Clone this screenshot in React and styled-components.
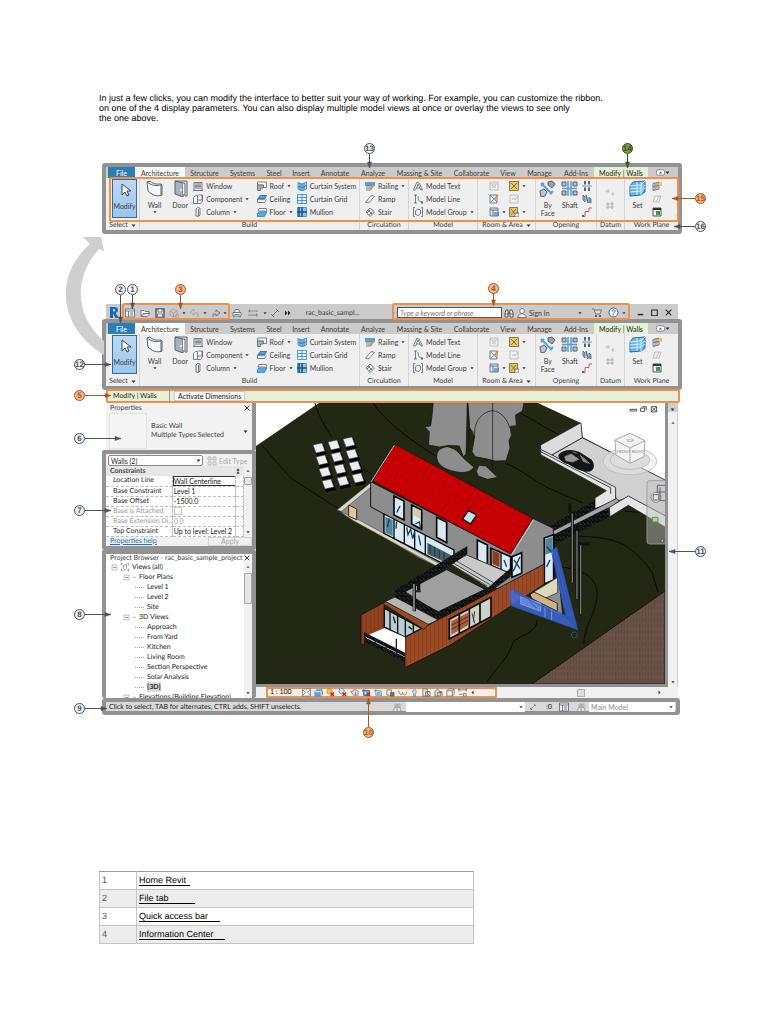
import { useState } from 'react';
import styled, { createGlobalStyle, css, ThemeProvider } from 'styled-components';

const theme = {
  frame: '#929292',
  chrome: '#cbcbcb',
  panel: '#efefef',
  line: '#d4d4d4',
  orange: '#f0914a',
  text: '#3c3c3c',
  blue: '#2b7db8',
};

// styles
const GlobalStyle = createGlobalStyle`
  * {
    box-sizing: border-box;
  }

  body {
    margin: 0;
    background: #fff;
    font-family: 'Liberation Sans', Arial, sans-serif;
    text-rendering: geometricPrecision;
  }

  button,
  input,
  select {
    margin: 0;
    padding: 0;
    border: 0;
    border-radius: 0;
    background: none;
    color: inherit;
    font: inherit;
  }

  svg {
    display: block;
    flex: none;
  }
`;

const StyledPage = styled.main`
  padding: 93px 0 80px;
`;

const StyledIntro = styled.p`
  margin: 0 80px 40px 99px;
  font-size: 9px;
  line-height: 10px;
  color: #000;
`;

const StyledFigure = styled.figure`
  position: relative;
  margin: 0 86px 70px 102px;
  font-family: Lato, 'Open Sans', sans-serif;
  font-size: 7px;
  line-height: 10px;
  color: ${({ theme }) => theme.text};
`;

const StyledRibbon = styled.div`
  border: 4px solid ${({ theme }) => theme.frame};
  border-radius: 3px;
  background: ${({ theme }) => theme.panel};
`;

const StyledTabs = styled.nav`
  display: grid;
  grid-template-columns: 2fr 27fr 50fr 39fr 37fr 26fr 28fr 40fr 36fr 57fr 47fr 26fr 37fr 36fr 54fr 30fr;
  height: 11px;
  background: ${({ theme }) => theme.chrome};
`;

const tabColors = {
  file: css`
    background: ${({ theme }) => theme.blue};
    color: #fff;
  `,
  active: css`
    background: #fafafa;
  `,
  context: css`
    background: #e4f2d8;
    color: #222;
  `,
};

const StyledTab = styled.button`
  min-width: 0;
  white-space: nowrap;
  display: flex;
  justify-content: center;
  align-items: center;
  ${({ $kind }) => tabColors[$kind]}
`;

const StyledPanels = styled.div`
  display: grid;
  grid-template-columns: 34fr 220fr 49fr 69fr 58fr 61fr 28fr 53fr;
`;

const StyledPanel = styled.section`
  min-width: 0;
  border-right: 1px solid ${({ theme }) => theme.line};

  &:last-child {
    border-right: 0;
  }
`;

const StyledPanelBody = styled.div`
  display: grid;
  grid-template-columns: ${({ $cols }) => $cols};
  height: 42px;
  padding: 1px 0 2px;
`;

const StyledPanelTitle = styled.div`
  display: flex;
  justify-content: center;
  align-items: center;
  gap: 3px;
  height: 10px;
  white-space: nowrap;
`;

const StyledBigTool = styled.button`
  display: flex;
  flex-direction: column;
  align-items: center;
  justify-content: flex-start;
  gap: 4px;
  min-width: 0;
  padding-top: 1px;
  line-height: 8px;
  color: ${({ theme }) => theme.text};

  ${({ $selected }) =>
    $selected &&
    css`
      margin: 0 2px 0 6px;
      border: 1px solid #2f6ea5;
      background: linear-gradient(#bcd8f2, #9cc6ee);
    `}
`;

const StyledBigLabel = styled.span`
  display: flex;
  flex-direction: column;
  align-items: center;
  gap: 1px;
`;

const StyledToolColumn = styled.div`
  display: flex;
  flex-direction: column;
  justify-content: ${({ $center }) => ($center ? 'center' : 'flex-start')};
  min-width: 0;
  padding-left: 2px;
`;

const StyledTool = styled.button`
  display: flex;
  align-items: center;
  gap: 3px;
  height: 13px;
  white-space: nowrap;
  text-align: left;
`;

const StyledHighlight = styled.div`
  position: absolute;
  inset: ${({ $inset }) => $inset};
  border: 2px solid ${({ theme }) => theme.orange};
  border-radius: 2px;
  pointer-events: none;
`;

const StyledQuickHighlight = styled(StyledHighlight)`
  height: 17px;
`;

const calloutTones = {
  plain: ['#f2f2f4', '#4b5260'],
  orange: ['#f4b98c', '#a8571c'],
  green: ['#7d9a45', '#3d5418'],
};

const calloutDirections = {
  down: 'column',
  up: 'column-reverse',
  right: 'row',
  left: 'row-reverse',
};

const StyledCallout = styled.div`
  position: absolute;
  z-index: 2;
  display: flex;
  flex-direction: ${({ $dir }) => calloutDirections[$dir]};
  align-items: center;
  top: ${({ $top }) => $top}px;
  ${({ $dir, $x }) => {
    if ($dir === 'right') return 'left: -28px;';
    if ($dir === 'left') return 'right: -24px;';
    return `left: calc(100% * ${$x} / 580 - 5px);`;
  }}
  color: ${({ $tone }) => calloutTones[$tone][1]};
`;

const StyledNumber = styled.span`
  width: 11px;
  height: 11px;
  border: 1px solid currentColor;
  border-radius: 50%;
  background: ${({ $tone }) => calloutTones[$tone][0]};
  font-family: 'Liberation Sans', Arial, sans-serif;
  font-size: 8px;
  font-weight: bold;
  line-height: 9px;
  display: flex;
  justify-content: center;
`;

const StyledCurve = styled.svg`
  position: absolute;
  left: -36px;
  top: -68px;
`;

const StyledTitleBar = styled.header`
  display: grid;
  grid-template-columns:
    16fr 15fr 15fr 15fr 13fr 8fr 12fr 9fr 13fr 6fr 17fr 16fr 8fr 12fr 14fr 75fr 21fr 5fr 107fr
    12fr 13fr 46fr 12fr 21fr 12fr 9fr 5fr 14fr 14fr 14fr 3fr;
  align-items: center;
  justify-items: center;
  height: 15px;
  margin: 0 4px;
  padding-top: 2px;
  background: ${({ theme }) => theme.chrome};
  white-space: nowrap;
`;

const StyledSearch = styled.input`
  width: calc(100% - 2px);
  height: 11px;
  padding: 0 2px;
  border: 1px solid #555;
  background: #fff;
  font-style: italic;

  &::placeholder {
    color: #777;
    opacity: 1;
  }
`;

const StyledSignIn = styled.button`
  justify-self: start;
  padding-left: 1px;
`;

const StyledOptions = styled.div`
  display: flex;
  align-items: center;
  position: relative;
  height: 14px;
  margin: -1px 2px 0 4px;
  border: 2px solid ${({ theme }) => theme.orange};
  border-radius: 2px;
  background: #e4f0da;
  color: #222;
`;

const StyledContext = styled.span`
  width: 62px;
  padding-left: 5px;
  border-right: 1px solid #999;
`;

const StyledActivate = styled.button`
  height: 10px;
  margin-left: 4px;
  padding: 0 3px;
  border: 1px solid #c4cbd4;
  background: #f8f9fb;
  line-height: 8px;
`;

const StyledWorkspace = styled.div`
  display: flex;
`;

const StyledPalette = styled.aside`
  width: 154px;
  flex: none;
  display: flex;
  flex-direction: column;
`;

const StyledTypeSelector = styled.section`
  height: 47px;
  margin-left: 4px;
  border-right: 4px solid ${({ theme }) => theme.frame};
  background: #f2f2f2;
`;

const StyledPaletteHeader = styled.header`
  display: flex;
  justify-content: space-between;
  align-items: center;
  height: ${({ $height }) => $height || 9}px;
  padding: 0 2px 0 4px;
  white-space: nowrap;
`;

const StyledType = styled.div`
  display: grid;
  grid-template-columns: 38px 1fr 7px;
  column-gap: 4px;
  align-items: center;
  height: 38px;
  margin: 0 2px 0 3px;
  line-height: 9px;
`;

const StyledTypePreview = styled.div`
  height: 36px;
  border: 1px solid #e2e2e2;
  background: #f5f5f5;
`;

const StyledBox = styled.section`
  height: ${({ $height }) => $height}px;
  border: 4px solid ${({ theme }) => theme.frame};
  border-bottom-width: ${({ $open }) => ($open ? 0 : 4)}px;
  border-radius: 2px;
  background: ${({ $open }) => ($open ? '#fff' : '#f0f0f0')};
  overflow: hidden;
`;

const StyledFilter = styled.div`
  display: flex;
  align-items: center;
  gap: 4px;
  height: 12px;
  padding: 1px 0 0 2px;
  color: #aaa;
`;

const StyledSelectBox = styled.span`
  position: relative;
  display: block;
  width: ${({ $width }) => $width};
  height: ${({ $height }) => $height || 10}px;
  background: #fff;

  svg {
    position: absolute;
    right: 2px;
    top: 3px;
    pointer-events: none;
  }
`;

const StyledSelect = styled.select`
  appearance: none;
  width: 100%;
  height: 100%;
  padding: 0 2px;
  line-height: 8px;
  border: ${({ $plain }) => ($plain ? '0' : '1px solid #888')};
  border-radius: ${({ $plain }) => ($plain ? '0' : '2px')};
  color: ${({ $plain }) => ($plain ? '#8a8a8a' : '#222')};
`;

const StyledEdit = styled.button`
  display: flex;
  align-items: center;
  gap: 2px;
  white-space: nowrap;
`;

const StyledScrollArea = styled.div`
  display: grid;
  grid-template-columns: 1fr 8px;
`;

const StyledScrollBar = styled.div`
  display: flex;
  flex-direction: column;
  align-items: center;
  justify-content: space-between;
  padding: 3px 0;
  background: #f1f1f1;
`;

const StyledThumb = styled.span`
  width: 8px;
  height: ${({ $height }) => $height}px;
  margin-bottom: auto;
  margin-top: 4px;
  border: 1px solid #a5a5a5;
  border-radius: 1px;
  background: #e6e6e6;
`;

const StyledProps = styled.table`
  width: 100%;
  table-layout: fixed;
  border-collapse: collapse;
  background: #fff;
  color: #222;
  line-height: 9px;

  th,
  td {
    height: 10px;
    padding: 0 0 0 1px;
    overflow: hidden;
    white-space: nowrap;
    font-weight: normal;
    text-align: left;
    border-bottom: 1px dashed #bdbdbd;
    border-right: 1px dashed #bdbdbd;
  }

  th {
    padding-left: 7px;
  }

  thead th {
    padding-left: 4px;
    border: 0;
    background: #e6e6e6;
    font-weight: bold;
    color: #444;
  }

  thead th + th {
    padding-left: 0;
  }
`;

const StyledPropRow = styled.tr`
  color: ${({ $off }) => ($off ? '#999' : '#222')};
`;

const StyledPropInput = styled.input`
  display: block;
  width: 100%;
  height: 8px;
  line-height: 8px;
  outline: ${({ $boxed }) => ($boxed ? '1px solid #333' : 'none')};
`;

const StyledCheck = styled.input`
  appearance: none;
  display: block;
  width: 8px;
  height: 8px;
  border: 1px solid #c4c4c4;
`;

const StyledPropFooter = styled.footer`
  display: flex;
  justify-content: space-between;
  height: 9px;
  padding-left: 4px;
  line-height: 8px;
`;

const StyledHelp = styled.a`
  color: #1a73c4;
`;

const StyledApply = styled.button`
  width: 44px;
  border: 1px solid #d6d6d6;
  color: #a5a5a5;
  line-height: 7px;
`;

const StyledTree = styled.ul`
  margin: 0;
  padding: 0 0 0 5px;
  height: 136px;
  overflow: hidden;
  list-style: none;
  color: #222;
`;

const StyledNode = styled.li`
  display: flex;
  align-items: center;
  gap: 3px;
  height: 10px;
  padding-left: ${({ $depth }) => $depth * 12}px;
  white-space: nowrap;
`;

const StyledDash = styled.span`
  width: ${({ $width }) => $width}px;
  border-top: 1px dotted #aaa;
`;

const StyledLabel = styled.span`
  background: ${({ $current }) => ($current ? '#dcdcdc' : 'transparent')};
  font-weight: ${({ $current }) => ($current ? 'bold' : 'normal')};
`;

const StyledView = styled.section`
  flex: 1;
  min-width: 0;
  display: flex;
  flex-direction: column;
  margin-right: 4px;
`;

const StyledCanvas = styled.div`
  display: grid;
  grid-template-columns: 1fr 10px;
  height: 284px;

  > svg {
    width: 100%;
    height: 284px;
    border-right: 3px solid ${({ theme }) => theme.frame};
    border-bottom: 3px solid ${({ theme }) => theme.frame};
  }
`;

const StyledViewScroll = styled.div`
  display: flex;
  flex-direction: column;
  align-items: center;
  gap: 9px;
  padding-top: 4px;
  border-right: 1px solid #ccc;
  background: linear-gradient(#cfcfcf 9px, #f1f1f1 9px);

  svg:last-child {
    margin: auto 0 3px;
  }
`;

const StyledViewBar = styled.div`
  display: flex;
  align-items: center;
  height: 11px;
  padding-left: 10px;
  background: #f0f0f0;
`;

const StyledControls = styled.div`
  display: flex;
  align-items: center;
  gap: 3px;
  width: 231px;
  height: 11px;
  padding-left: 2px;
  border: 2px solid ${({ theme }) => theme.orange};
  border-radius: 1px;
  line-height: 7px;
  white-space: nowrap;
`;

const StyledScale = styled.span`
  width: 29px;
  color: #111;
`;

const StyledHorizontalScroll = styled.div`
  flex: 1;
  display: flex;
  align-items: center;
  justify-content: flex-end;
  gap: 72px;
  padding-right: 16px;
`;

const StyledHandle = styled.span`
  width: 8px;
  height: 8px;
  border: 1px solid #b0b0b0;
  background: #ddd;
`;

const StyledStatus = styled.footer`
  display: flex;
  align-items: center;
  height: 17px;
  margin: 0 2px 0 0;
  padding: 0 1px 0 3px;
  border: 4px solid ${({ theme }) => theme.frame};
  border-radius: 3px;
  background: #d9d9d9;
  color: #222;
  white-space: nowrap;
`;

const StyledStatusText = styled.span`
  flex: 1;
`;

const StyledStatusIcons = styled.span`
  display: flex;
  align-items: center;
  justify-content: space-around;
  width: ${({ $width }) => $width}px;
`;

const StyledIndex = styled.table`
  width: calc(100% - 393px);
  min-width: 375px;
  margin: 156px 0 0 99px;
  border-collapse: collapse;
  font-size: 9px;
  line-height: 11px;

  td {
    height: 18px;
    padding: 0 2px;
    border: 1px solid #c4c4c4;
    border-top-color: #9a9a9a;
    color: #555;
  }

  td:first-child {
    width: 37px;
  }

  tr:nth-child(even) td {
    background: #ededed;
  }
`;

const StyledLink = styled.a`
  padding-right: ${({ $tail }) => $tail}px;
  border-bottom: 1px solid #000;
  color: #000;
  text-decoration: none;
`;

// icons, drawn on a 10x10 grid
const D = '#59616e';
const B = '#2c86cf';
const Y = '#f3c64b';

const glyphs = {
  window: <><path d="M1 9.5V1.5h8v8M0 9.5h10" stroke={D} fill="#e5e7ea" /><path d="M3 2v6M5 2v6M7 2v6M2 5h6" stroke={D} /></>,
  component: <><path d="M.5 3.5l2-2h2v8h-4zM4.5 6h4.5V1H5.5" stroke={D} fill="#f7f7f7" /><path d="M4.5 9.5h3L9.5 7V1" stroke={D} fill="none" /></>,
  column: <path d="M3 2l1.5-1.5L7 1v7L5.5 9.5 3 9zM5.5 2v7" stroke={D} fill="#e8eaed" />,
  roof: <><path d="M.5 4V1H9.5v5.500H6V4z" stroke={D} fill="#fff" /><path d="M.5 4v5.5h3V7h3V4z" stroke={D} fill="#aab1bb" /></>,
  ceiling: <><path d="M1 4l2-3h7L8 6H0z" fill="#4fa5e5" /><path d="M1.5 4.5l2-3h6l-2 3zM.5 4.5v4h7l2-3" stroke={D} fill="none" /></>,
  floor: <><path d="M2 1.500h7.500v4L8 8V4H1z" stroke={D} fill="#fff" /><path d="M0 7l2-2h7L7.5 9.5H0z" fill="#57aae8" stroke={B} /></>,
  curtainSystem: <><path d="M1 1.5l4 1.5 4.5-2v7l-4.5 2-4-2z" fill="#a6d3f4" stroke={B} /><path d="M5 3v7M3 2v7M7 2v7M1 5.5l4 1 4.5-2" stroke="#1f6cab" fill="none" /></>,
  curtainGrid: <><path d="M.5.5h9v9h-9z" fill="#e6f4fd" stroke={B} /><path d="M5 0v10M0 3.5h10M0 6.5h10" stroke={B} /></>,
  mullion: <><path d="M.5.5h9v9h-9z" fill="#8fc3ea" stroke={B} /><path d="M5 0v10M0 5h10M2 0v10" stroke="#1b4f82" strokeWidth="1.5" /></>,
  railing: <><path d="M0 2h10M0 4h10" stroke={B} strokeWidth="1.5" /><path d="M2 4v6M4 4v6M6 4v5" stroke={D} /><path d="M5 9l4-5" stroke="#d98b2b" strokeWidth="1.5" /></>,
  ramp: <path d="M.5 8C3 7 4 2 7 1.5l2.5 1C7 4 6 8 3 9z" fill="#f8f8f8" stroke={D} />,
  stair: <><path d="M1 5l4-4 4.5 4L5 9.5z" fill="#eee" stroke={D} /><path d="M3 3l4.5 4.5M2 6l3-3M4 8l3.5-3.5" stroke={D} /></>,
  modelText: <><path d="M.5 9L4 1l2 1 3.5 7H8L7 7H3.5l-1 2z" fill="#fff" stroke={D} /><path d="M5 3L3.5 7M5 3l2 4" stroke={D} /></>,
  modelLine: <><path d="M1 1h3M2.5 1v8M1 9h3M5 2c0 4 1 6 4 6" fill="none" stroke={D} /><path d="M8 7.500h2v2H8z" fill={D} /></>,
  modelGroup: <><path d="M2 .5H.5v9H2M8 .5h1.5v9H8" fill="none" stroke={D} /><path d="M2.5 4l2-2 3 1v4l-2 1.5-3-1z" fill="#eee" stroke={D} /></>,
  roomOff: <path d="M1 1h8v8H1zM3 4l4 3M7 4L3 7M1 3h8" fill="none" stroke="#b5b5b5" />,
  roomTag: <><path d="M1 1h7v8H1z" fill="#e9eef5" stroke={D} /><path d="M2 2l6 6M2 8l3-3" stroke={B} /><path d="M5 6l4-5" stroke="#df9327" strokeWidth="2" /></>,
  roomArea: <><path d="M1 1h8v8H1zM1 3h8M4 3v6" fill="#dfe7f0" stroke={D} /><path d="M5 5h5v4H5z" fill={B} opacity=".6" /></>,
  area: <><path d="M.5.5h9v9h-9z" fill={Y} stroke={D} /><path d="M2 2l6 6M8 2L2 8" stroke={D} /></>,
  areaOff: <path d="M1 1h8v8H1zM3 6l2-2 1 2 3-4" fill="none" stroke="#b5b5b5" />,
  areaTag: <><path d="M.5.5h8v9h-8z" fill={Y} stroke={D} /><path d="M2 2l5 6M7 2L2 8" stroke={D} /><path d="M6 6h4v4H6z" fill="#eee" stroke={D} /></>,
  wallOpening: <><path d="M3 0v3.500M7 0v3.500M3 6.500V10M7 6.500V10" stroke={D} strokeWidth="2" /><path d="M0 5h10" stroke={B} /></>,
  vertical: <><path d="M1 1v5l2 2V3zM7 3v5l2 1V5z" fill="#a6adb5" stroke={D} /><path d="M4 1l2 8" stroke={B} strokeWidth="1.5" /></>,
  dormer: <><path d="M1 9.5h2v-5h4V1h3" fill="none" stroke="#b13f3f" /><path d="M0 8h2v2H0z" fill={D} /></>,
  level: <path d="M0 4h5M3 2v4M6 7h3M8 5v4" fill="none" stroke="#b5b5b5" />,
  grid: <path d="M1 4h8M1 7h8M3 2v7M7 1v8" fill="none" stroke="#a5a5a5" />,
  show: <><path d="M1 2.5l6-1.5v7L1 9.5zM3 2v7M5 2v6M1 5.5l6-1" fill="#eee" stroke={D} /><path d="M7 1h3v4H7z" fill={Y} /></>,
  refPlane: <path d="M3 2h6L7 8H1zM4 8l3-6" fill="none" stroke="#b5b5b5" />,
  viewer: <><path d="M1 1h8v8H1z" fill="#eef2ee" stroke="#333" /><path d="M1 2h8" stroke="#333" strokeWidth="2" /><path d="M4 4h4v4H4z" fill="#3c9a4c" /></>,
  options: <><path d="M.5 1h9v8h-9zM.5 3h9M3.5 3v6" fill="#f4f4f4" stroke={D} /><path d="M5 5h3M5 7h3" stroke={D} /></>,
  open: <path d="M1 8.5v-6h3l1 1h4v2M1 8.5h6l3-3H3z" fill="#fafafa" stroke={D} />,
  save: <><path d="M1 1h8v8H1z" fill="#eee" stroke={D} strokeWidth="1.5" /><path d="M3 1h4v3H3zM2.5 6h5v3h-5z" fill="#fff" stroke={D} /></>,
  sync: <path d="M1 3l3.5-2L8 3v4L4.5 9 1 7zM1 3l3.5 2L8 3M4.5 5v4M7 7h3v3H7z" fill="none" stroke="#999" />,
  undo: <path d="M5 3V1L1 4l4 3V5h4v4" fill="none" stroke="#999" />,
  redo: <path d="M5 4V2l4 3-4 3V6H2v3" fill="none" stroke={D} />,
  print: <path d="M2.500 4.500l1-3h3l1 3M1 8V4.500h8V8zM2 8v1.5M8 8v1.5M2.5 6.5h5" fill="#fafafa" stroke={D} />,
  measure: <path d="M0 3h10M0 7h10M1.5 1.5v3M8.5 5.5v3" fill="none" stroke="#777" />,
  dimension: <path d="M2 8l6-6M1 6l3 3M6 1l3 3" stroke={D} fill="none" />,
  chevrons: <path d="M0 1l4 4-4 4zM5 1l4 4-4 4z" fill="#222" />,
  search: <path d="M1 9V5l1-3h2v7zM6 9V2h2l1 3v4zM4 5h2M1 6h3M6 6h3" fill="#fff" stroke="#333" />,
  user: <path d="M5 .5c3 0 3 5 0 5s-3-5 0-5zM.5 9.5C1 7 3 6.5 5 5.5 7 6.5 9 7 9.5 9.5z" fill="#f5f5f5" stroke={D} />,
  cart: <><path d="M0 1h2l1.5 5H8l1.5-4h-7" fill="#f1d9b0" stroke={D} /><path d="M3 8h2M7 8h2" stroke={D} strokeWidth="2" /></>,
  minimize: <path d="M1 8h8" stroke="#222" strokeWidth="2" />,
  maximize: <path d="M1 1.5h8v8H1z" fill="none" stroke="#222" strokeWidth="1.5" />,
  close: <path d="M1 1l8 8M9 1L1 9" stroke="#222" strokeWidth="1.5" />,
  left: <path d="M7 1v8L3 5z" fill="#333" />,
  right: <path d="M3 1v8l4-4z" fill="#333" />,
  up: <path d="M1 7h8L5 2z" fill="#555" />,
  down: <path d="M1 3h8L5 8z" fill="#333" />,
  toggle: <><rect x="0.5" y="2" width="9" height="6" rx="2" fill="#fff" stroke={D} /><path d="M3 6h4L5 4z" fill={D} /></>,
  types: <path d="M1 1h3v3H1zM6 1h3v3H6zM1 6h3v3H1zM6 6h3v3H6z" fill="none" stroke="#aaa" />,
  expand: <path d="M3 4l2-3 2 3zM3 9l2-3 2 3z" fill="#333" stroke="#333" />,
  views: <path d="M2 .5H.5V3M8 .5h1.5V3M2 9.5H.5V7M8 9.5h1.5V7M3 3l4-1v5L5 9 3 7z" fill="none" stroke={D} />,
  node: <><path d="M1.5 1.5h7v7h-7z" fill="#fff" stroke="#8d8d8d" /><path d="M3 5h4" stroke="#345" /></>,
  detail: <><path d="M.5 1h9v8h-9z" fill="#fff" stroke={D} /><path d="M1 2l3 3-3 3M9 2L6 5l3 3" fill="none" stroke={D} /></>,
  style: <><path d="M1 4l2-2h7v4L8 9H1z" fill="#5aaae2" stroke={B} /><path d="M1 4h7v5M8 4l2-2" stroke="#fff" fill="none" /></>,
  sunOff: <><circle cx="4" cy="4" r="3" fill={Y} stroke="#c08a1e" /><path d="M5 5l4 4M9 5L5 9" stroke="#c12525" strokeWidth="1.5" /></>,
  shadowOff: <><circle cx="4" cy="3.5" r="3" fill="#cfe4f5" stroke={B} /><path d="M5 5l4 4M9 5L5 9" stroke="#c12525" strokeWidth="1.5" /></>,
  render: <path d="M1 4h2l1-2h3l2 2v4H4zM6 4v4" fill="#e4edf5" stroke={D} />,
  cropOff: <><path d="M0 3h8v6M2 1v7h6" fill="#9ccbee" stroke={B} strokeWidth="1.5" /><path d="M5 5l4 4M9 5L5 9" stroke="#c12525" strokeWidth="1.5" /></>,
  crop: <path d="M0 3h8v6M2 1v7h7M4 5h2v2H4z" fill="#cce4f7" stroke={B} />,
  lock: <><path d="M1 2h5v6H1z" fill="#eee" stroke={D} /><path d="M5 5h4v4H5z" fill="#4b8b5b" stroke={D} /></>,
  glasses: <path d="M0 3l2 3c1 3 4 1 3-1 0 3 4 4 5 0V3" fill="none" stroke={D} />,
  bulb: <path d="M5 2c3 0 2 3 1 4v3H4V6C3 5 2 2 5 2z" fill="#cfe7f9" stroke={B} />,
  sheet: <path d="M1 1h5v8H1zM4 4h5v5H4zM5 5l4 4" fill="#e7e7e7" stroke={D} />,
  house: <path d="M1 9V4l3-3 3 3v5zM4 9V5h5v4M6 4h3" fill="#cfdbe7" stroke={D} />,
  constraint: <path d="M0 2h10M1 0v4M9 0v4M1 7h4M6 6h3v3H6z" fill="none" stroke={D} />,
  people: <path d="M3 2h2v3H3zM6 2h2v3H6zM1 9l2-4h5l1 4M5 5v4" fill="#ddd" stroke="#999" />,
  cube: <path d="M1 3l2-2h6v6L7 9H1zM1 3h6v6M7 3l2-2" fill="#eee" stroke={D} />,
};

const Icon = ({ name, size = 10 }) => (
  <svg width={size} height={size} viewBox="0 0 10 10" strokeWidth="0.8" aria-hidden="true">
    {glyphs[name]}
  </svg>
);

const bigGlyphs = {
  cursor: <path d="M6 3v11l3-3 2 4 2-1-2-4h4z" fill="#fff" stroke="#3b4450" />,
  wall: <><path d="M1 2l3-1c4 4 8 3 11 3l1 1v10c-5 2-10 0-14-4z" fill="#f6f7f8" stroke={D} /><path d="M1 2c5 4 10 4 14 3v11" fill="none" stroke={D} /></>,
  door: <><path d="M3 1h12v15h-2" fill="#eceeef" stroke={D} /><path d="M3 1l8 2v14l-8-3z" fill="#a9b1bc" stroke={D} /><path d="M11 3h2v12h-2" fill="#fff" stroke={D} /><circle cx="9" cy="10" r="1" fill="#fff" /></>,
  byFace: <><path d="M2 3l11 11M2 6l3-3M11 14l3-3" stroke="#50a5e4" strokeWidth="2" /><path d="M9 2l4-1 3 3-3 4-4-3z" fill="#9aa1ab" stroke={D} /><path d="M1 11l4-2 3 3-2 4-4 1z" fill="#c1c6cc" stroke={D} /></>,
  shaft: <><path d="M1 2h4v4H1zM1 11h4v4H1zM12 2h4v4h-4zM12 11h4v4h-4z" fill="#b8bec6" stroke={D} /><path d="M1 8.5h15M7 1v15M10 1v15" stroke="#4aa0df" strokeWidth="1.5" /></>,
  set: <><path d="M4 2l12-1v11l-4 3-11 1V6z" fill="#6bb5ea" stroke="#236ca8" /><path d="M8 2v13M12 2v13M1 9l11-1 4-3M1 12l11-1 4-3M1 6l11-1 4-4" fill="none" stroke="#d5effe" /></>,
};

const BigIcon = ({ name }) => (
  <svg width="17" height="17" viewBox="0 0 17 17" aria-hidden="true">
    {bigGlyphs[name]}
  </svg>
);

// data
const tabs = ['File', 'Architecture', 'Structure', 'Systems', 'Steel', 'Insert', 'Annotate', 'Analyze', 'Massing & Site', 'Collaborate', 'View', 'Manage', 'Add-Ins', 'Modify | Walls'];
const tabKinds = { File: 'file', Architecture: 'active', 'Modify | Walls': 'context' };

const panels = [
  { title: 'Select', menu: true, cols: '1fr', items: [{ big: 'cursor', label: 'Modify', selected: true }] },
  {
    title: 'Build',
    cols: '29fr 22fr 63fr 40fr 64fr',
    items: [
      { big: 'wall', label: 'Wall', menu: true },
      { big: 'door', label: 'Door' },
      [['window', 'Window'], ['component', 'Component', true], ['column', 'Column', true]],
      [['roof', 'Roof', true], ['ceiling', 'Ceiling'], ['floor', 'Floor', true]],
      [['curtainSystem', 'Curtain System'], ['curtainGrid', 'Curtain Grid'], ['mullion', 'Mullion']],
    ],
  },
  { title: 'Circulation', cols: '3fr 46fr', items: [[], [['railing', 'Railing', true], ['ramp', 'Ramp'], ['stair', 'Stair']]] },
  { title: 'Model', cols: '2fr 67fr', items: [[], [['modelText', 'Model Text'], ['modelLine', 'Model Line'], ['modelGroup', 'Model Group', true]]] },
  {
    title: 'Room & Area',
    menu: true,
    cols: '9fr 21fr 28fr',
    items: [[], [['roomOff'], ['roomTag'], ['roomArea', '', true]], [['area', '', true], ['areaOff'], ['areaTag', '', true]]],
  },
  {
    title: 'Opening',
    cols: '24fr 21fr 16fr',
    items: [{ big: 'byFace', label: 'By Face', stacked: true }, { big: 'shaft', label: 'Shaft' }, [['wallOpening'], ['vertical'], ['dormer']]],
  },
  { title: 'Datum', cols: '6fr 22fr', center: true, items: [[], [['level'], ['grid']]] },
  { title: 'Work Plane', cols: '25fr 28fr', items: [{ big: 'set', label: 'Set' }, [['show'], ['refPlane'], ['viewer']]] },
];

const properties = [
  ['Location Line', 'Wall Centerline'],
  ['Base Constraint', 'Level 1'],
  ['Base Offset', '-1500.0'],
  ['Base is Attached', null, true],
  ['Base Extension Di...', '0.0', true],
  ['Top Constraint', 'Up to level: Level 2'],
];

const tree = [
  ['Views (all)', 0],
  ['Floor Plans', 1],
  ['Level 1', 2],
  ['Level 2', 2],
  ['Site', 2],
  ['3D Views', 1],
  ['Approach', 2],
  ['From Yard', 2],
  ['Kitchen', 2],
  ['Living Room', 2],
  ['Section Perspective', 2],
  ['Solar Analysis', 2],
  ['{3D}', 2],
  ['Elevations (Building Elevation)', 1],
];

const viewControls = ['detail', 'style', 'sunOff', 'shadowOff', 'render', 'cropOff', 'crop', 'lock', 'glasses', 'bulb', 'sheet', 'house', 'cube', 'constraint'];

const index = [
  ['Home Revit', 4],
  ['File tab', 26],
  ['Quick access bar', 12],
  ['Information Center', 11],
];

const Callout = ({ n, x, top, dir = 'right', length, tone = 'plain' }) => {
  const vertical = dir === 'up' || dir === 'down';
  const heads = { right: 'h-6v-2l6 2-6 2v-2', left: 'h6v-2l-6 2 6 2v-2', down: 'v-6h-2l2 6 2-6h-2', up: 'v6h-2l2-6 2 6h-2' };
  const tips = { right: [length, 2.5], left: [0, 2.5], down: [2.5, length], up: [2.5, 0] };
  return (
    <StyledCallout $x={x} $top={top} $dir={dir} $tone={tone}>
      <StyledNumber $tone={tone}>{n}</StyledNumber>
      <svg width={vertical ? 5 : length} height={vertical ? length : 5} stroke="currentColor" fill="currentColor">
        <path d={vertical ? `M2.5 0V${length}` : `M0 2.5H${length}`} />
        <path d={`M${tips[dir].join(' ')}${heads[dir]}`} strokeWidth="0.5" />
      </svg>
    </StyledCallout>
  );
};

const PanelItem = ({ item, center }) => {
  if (Array.isArray(item)) {
    return (
      <StyledToolColumn $center={center}>
        {item.map(([icon, label, menu]) => (
          <StyledTool key={icon} aria-label={label || icon}>
            <Icon name={icon} />
            {label}
            {menu && <Icon name="down" size={4} />}
          </StyledTool>
        ))}
      </StyledToolColumn>
    );
  }
  return (
    <StyledBigTool $selected={item.selected}>
      <BigIcon name={item.big} />
      <StyledBigLabel>
        {item.stacked ? <span>By<br />Face</span> : <span>{item.label}</span>}
        {item.menu && <Icon name="down" size={4} />}
      </StyledBigLabel>
    </StyledBigTool>
  );
};

const Ribbon = () => (
  <StyledRibbon>
    <StyledTabs>
      <span />
      {tabs.map((tab) => (
        <StyledTab key={tab} $kind={tabKinds[tab]}>{tab}</StyledTab>
      ))}
      <StyledTab aria-label="Minimize ribbon">
        <Icon name="toggle" size={9} />
        <Icon name="down" size={5} />
      </StyledTab>
    </StyledTabs>
    <StyledPanels>
      {panels.map(({ title, menu, cols, items, center }) => (
        <StyledPanel key={title}>
          <StyledPanelBody $cols={cols}>
            {items.map((item, i) => (
              <PanelItem key={i} item={item} center={center} />
            ))}
          </StyledPanelBody>
          <StyledPanelTitle>
            {title}
            {menu && <Icon name="down" size={5} />}
          </StyledPanelTitle>
        </StyledPanel>
      ))}
    </StyledPanels>
  </StyledRibbon>
);

const TitleBar = () => (
  <StyledTitleBar>
    <svg width="10" height="11" viewBox="0 0 10 11">
      <path d="M1 0h4.5C10 0 10 5.5 6.5 6L10 11H6.5L4 6.5V11H1zM4 2v2.5c3 .5 3-3 0-2.5z" fill="#1c67ad" />
    </svg>
    <Icon name="options" />
    <Icon name="open" />
    <Icon name="save" />
    <Icon name="sync" />
    <Icon name="down" size={4} />
    <Icon name="undo" />
    <Icon name="down" size={4} />
    <Icon name="redo" />
    <Icon name="down" size={4} />
    <Icon name="print" />
    <Icon name="measure" />
    <Icon name="down" size={4} />
    <Icon name="dimension" />
    <Icon name="chevrons" size={6} />
    <span>rac_basic_sampl...</span>
    <span />
    <Icon name="right" size={5} />
    <StyledSearch aria-label="Search" placeholder="Type a keyword or phrase" />
    <Icon name="search" />
    <Icon name="user" />
    <StyledSignIn>Sign In</StyledSignIn>
    <Icon name="down" size={4} />
    <Icon name="cart" />
    <svg width="11" height="11" viewBox="0 0 11 11">
      <circle cx="5.5" cy="5.5" r="4.5" fill="#f7f9fc" stroke="#34659a" />
      <path d="M4 4.5C4 2 7.5 2.5 7 4.5 6.5 5.5 5.5 5.5 5.5 6.5M5.5 7.5v1" stroke="#34659a" fill="none" />
    </svg>
    <Icon name="down" size={4} />
    <span />
    <Icon name="minimize" size={7} />
    <Icon name="maximize" size={7} />
    <Icon name="close" size={7} />
  </StyledTitleBar>
);

const Properties = () => {
  const [filter, setFilter] = useState('Walls (2)');

  return (
    <>
      <StyledTypeSelector>
        <StyledPaletteHeader>
          Properties
          <Icon name="close" size={6} />
        </StyledPaletteHeader>
        <StyledType>
          <StyledTypePreview />
          <span>Basic Wall<br />Multiple Types Selected</span>
          <Icon name="down" size={5} />
        </StyledType>
      </StyledTypeSelector>
      <StyledBox $height={100}>
        <StyledFilter>
          <StyledSelectBox $width="95px" $height={11}>
            <StyledSelect aria-label="Filter" value={filter} onChange={(e) => setFilter(e.target.value)}>
              <option>Walls (2)</option>
            </StyledSelect>
            <Icon name="down" size={5} />
          </StyledSelectBox>
          <StyledEdit><Icon name="types" /> Edit Type</StyledEdit>
        </StyledFilter>
        <StyledScrollArea>
          <StyledProps>
            <colgroup>
              <col width="66" />
              <col width="63" />
              <col width="8" />
            </colgroup>
            <thead>
              <tr>
                <th colSpan="2">Constraints</th>
                <th><Icon name="expand" size={6} /></th>
              </tr>
            </thead>
            <tbody>
              {properties.map(([name, value, off], i) => (
                <StyledPropRow key={name} $off={off}>
                  <th scope="row">{name}</th>
                  <td>
                    {value === null ? (
                      <StyledCheck type="checkbox" aria-label={name} disabled />
                    ) : (
                      <StyledPropInput aria-label={name} defaultValue={value} disabled={off} $boxed={i === 0} />
                    )}
                  </td>
                  <td />
                </StyledPropRow>
              ))}
            </tbody>
          </StyledProps>
          <StyledScrollBar>
            <Icon name="up" size={4} />
            <StyledThumb $height={8} />
            <Icon name="down" size={4} />
          </StyledScrollBar>
        </StyledScrollArea>
        <StyledPropFooter>
          <StyledHelp href="#help">Properties help</StyledHelp>
          <StyledApply>Apply</StyledApply>
        </StyledPropFooter>
      </StyledBox>
    </>
  );
};

const Browser = () => (
  <StyledBox $height={148} $open>
    <StyledPaletteHeader $height={8}>
      Project Browser - rac_basic_sample_project
      <Icon name="close" size={6} />
    </StyledPaletteHeader>
    <StyledScrollArea>
      <StyledTree>
        {tree.map(([label, depth]) => (
          <StyledNode key={label} $depth={depth}>
            {depth < 2 && <Icon name="node" size={7} />}
            {depth === 0 && <Icon name="views" size={8} />}
            {depth === 1 && <StyledDash $width={3} />}
            {depth === 2 && <StyledDash $width={9} />}
            <StyledLabel $current={label === '{3D}'}>{label}</StyledLabel>
          </StyledNode>
        ))}
      </StyledTree>
      <StyledScrollBar>
        <Icon name="up" size={4} />
        <StyledThumb $height={31} />
        <Icon name="down" size={4} />
      </StyledScrollBar>
    </StyledScrollArea>
  </StyledBox>
);

const panelSpots = [0, 1, 2, 3].flatMap((row) => [0, 1, 2].map((col) => [313 + col * 15 + row * 3, 444 + row * 12 - col * 3]));

const Scene = () => (
  <svg viewBox="256 403 409 281" preserveAspectRatio="none" role="img" aria-label="3D view of the house">
    <defs>
      <pattern id="tiles" width="20" height="20" patternUnits="userSpaceOnUse" patternTransform="skewX(-32)">
        <path d="M0 0v20" stroke="#6d0000" strokeWidth="2" />
      </pattern>
      <pattern id="boards" width="12" height="12" patternUnits="userSpaceOnUse">
        <path d="M0 0v12" stroke="#6b3018" strokeWidth="2" />
      </pattern>
      <pattern id="soil" width="3" height="6" patternUnits="userSpaceOnUse">
        <path d="M0 0v4" stroke="#554237" strokeWidth="1" />
      </pattern>
      <pattern id="rails" width="12" height="14" patternUnits="userSpaceOnUse">
        <path d="M0 0h12v14H0z" fill="#0d0e0f" />
        <path d="M3 3l3 4M8 8l2 3" stroke="#777" strokeWidth="1.5" />
      </pattern>
    </defs>
    <path d="M256 403h409v281H256z" fill="#fff" />
    <path d="M256 446L319 403h219l43 20 84 82v179H256z" fill="#222814" />
    <path d="M665 591v93H532z" fill="#675045" />
    <path d="M665 591v93H532z" fill="url(#soil)" stroke="#111" />

    {/* terrain contours */}
    <g fill="none" stroke="#080a05">
      <path d="M262 445c10 12 20 24 30 34l50 32M315 403c4 14 10 24 17 34M352 456c4 8 12 14 20 18M373 403c14 20 34 34 52 46l30 20M505 463c20 8 30 20 50 28l28 12M520 413c20 10 30 20 60 30" />
      <path d="M561 567c20 2 38 10 36 30s-14 30-13 47M576 536c30 2 50 0 76 36l6 20M537 620c0 12-14 14-24 22-4 16-14 22-26 40M625 511c12 2 20 0 40 2" />
    </g>

    {/* solar panels */}
    {panelSpots.map(([x, y]) => (
      <g key={`${x}-${y}`}>
        <path d={`M${x + 1} ${y + 3}l10-2 3 9-10 2z`} fill="#000" />
        <path d={`M${x} ${y + 1}l9-2 3 8-9 2z`} fill="#ececf0" stroke="#333" strokeWidth="0.5" />
      </g>
    ))}

    {/* everything below is drawn at three times the size */}
    <g transform="translate(350 400) scale(0.3333)" strokeWidth="2.5">
      <path d="M564 8l128 60 6 44 250 130V8z" fill="#fff" />

      {/* trees */}
      <g fill="#8d8d8d" stroke="#111" strokeWidth="2">
        <path d="M250 8l-4 40-4 30-18 2 14 15-2 40 32 6 30-5 30 2 12 32 8-8 4-154z" />
        <path d="M354 8h168l-5 25-20 12 2 32-18 2 3 28-7 15 3 22-12 38-32 1-20-5-40-8-10-15 8-45-16-30z" />
        <path d="M260 172c0-20 12-30 32-32 30 6 40 26 50 36l30 26c-10 14-30 18-50 14-36-6-60-20-62-44zM379 214l8-18 20 2 36 34-30 6-28-10z" />
        <path d="M428 8v202M374 100c-2-36 24-66 54-68 24 2 44 24 52 54M352 8l6 60-4 90M356 92c20-4 26 20 4 34" fill="none" />
      </g>

      {/* plaza and retaining walls */}
      <path d="M605 165l92-52 250 128v140l-112-90-35 14-10-40z" fill="#d0d0d0" stroke="#222" />
      <path d="M572 135l121-67 4 45-92 52-33-5z" fill="#dcdcdc" stroke="#222" />
      <path d="M572 148l225 114v40l-62 24v-32l34-22-197-108z" fill="#e4e4e4" stroke="#222" />
      <path d="M572 155l210 108v18" fill="none" stroke="#222" />
      <path d="M605 395l195-100 8 8-30 22-165 88z" fill="#a5a5a5" stroke="#222" />
      <path d="M600 378l135-78v26l-130 66zM610 404l166-82v30l-164 82z" fill="url(#rails)" />
      <path d="M778 322l57-34 112 60v34l-112-66-55 34z" fill="#e6e6e6" stroke="#222" />
      <path d="M625 165c16-20 50-18 72-4l28 18c12 16 8 36-12 36-24 0-44-14-58-22-16-4-30-14-30-28z" fill="#141516" />
      <path d="M644 170l20-8 22 16-18 8-20-4zM690 164l10 20 16 6M700 172l20 20M668 156l14 4" fill="#999" stroke="#888" />

      {/* terrace */}
      <path d="M-39 330L62 248v72l40 22v58l180 92-16 10-60-28z" fill="#8d8d8d" stroke="#222" />
      <path d="M-39 330L62 248v14L-25 334zM-30 335l40 16 262 142-8 8L10 362z" fill="#d8d8c5" stroke="#333" strokeWidth="1.5" />
      <path d="M-4 315l24 12v32l-24-10z" fill="#dfc8a0" stroke="#111" />

      {/* main house */}
      <path d="M62 245l420 215 66-105 62 30v150l-130 60-125-90-50-10L102 342l-40-22z" fill="#8d8d8d" stroke="#111" />
      <path d="M135 133l413 222-66 107L67 242z" fill="#cb0005" />
      <path d="M135 133l413 222-66 107L67 242z" fill="url(#tiles)" stroke="#181818" />
      <path d="M133 136L63 246M550 360l-66 106" stroke="#ddd" fill="none" />
      <path d="M355 332l25 13-18 27-24-15z" fill="#c7dfe8" stroke="#111" strokeWidth="4" />
      <g fill="#d8ebf7" stroke="#070707" strokeWidth="5">
        <path d="M132 288l30 15v57l-30-15zM185 315l30 15v58l-30-16zM260 352l30 15v61l-30-16zM382 420l30 15v60l-30-15zM423 445l59 25v52l-59-26zM486 470l29-12v62l-29 12z" />
        <path d="M102 342l210 108v28l-30 14-180-92z" strokeWidth="4" />
        <path d="M132 358v58M163 374v58M194 390v58M226 406v58M453 458v50" strokeWidth="4" />
        <path d="M583 414l28-10v136l-28 12z" />
      </g>
      <path d="M427 450l22 10v42l-22-10z" fill="#8d3c1d" />
      <path d="M190 322l20 10v24l-20-10z" fill="#d6cca2" />
      <path d="M106 350l22 10v48l-22-10zM586 418l22-8v46l-22 8z" fill="#51839a" />
      <path d="M232 428l76 40v12l-20 8-56-26z" fill="#4a5c66" />
      <path d="M240 434v28M254 442v26M268 450v24M282 458v20M170 382l4 22 8-16 6 28 6-20M118 356l-6 26M140 364l-2 22M206 406l6 30M196 372l12-6 4 20M150 318l-10 20M492 480l18 26M510 470l-20 44M462 480l8 20M590 440l14 16M590 500l10-20" fill="none" stroke="#173f58" strokeWidth="4" />

      {/* wing */}
      <path d="M105 605l30-14 130 69-32 14z" fill="#b5b5b5" stroke="#222" />
      <path d="M165 575l125-66 125 64-150 66z" fill="#a0a0a0" stroke="#111" />
      <path d="M302 492l48-27 132 56-66 44z" fill="#c9c9c9" stroke="#222" />
      <path d="M300 492l112 66M308 488l112 66M318 482l112 66" stroke="#333" fill="none" />
      <path d="M135 570l217-132v24l-58 40-129 74 6 8 94 50 150-72 67-58v26l-67 50-150 78-130-66z" fill="url(#rails)" />
      <path d="M165 712l418-220v60l-103 68-180 116-135 67z" fill="#9a4a25" />
      <path d="M33 645l70-38v78l-60 30v20l-10-2z" fill="#8f4220" />
      <path d="M165 712l418-220v60l-103 68-180 116-135 67zM33 645l70-38v78l-60 30v20l-10-2z" fill="url(#boards)" stroke="#111" />
      <path d="M103 625l112 60-50 26-62-30z" fill="#b9cdd6" stroke="#111" strokeWidth="4" />
      <path d="M120 634v56M143 646v56M166 658v50M190 672v24M130 650l6 20M176 680l10 8" stroke="#111" strokeWidth="4" />
      <path d="M100 612l5-8 132 70-16 14z" fill="#9a4a25" stroke="#111" strokeWidth="2" />
      <path d="M48 708l55-24 62 28v70L45 724z" fill="#fff" />
      <path d="M42 696l123 62v12L42 708zM44 712l121 60v14L44 726z" fill="url(#rails)" />
      <path d="M139 716v34M44 704v24M76 720v24M108 736v24M140 752v24" stroke="#222" strokeWidth="4" />
      <path d="M193 550v84M206 532v40" stroke="#111" strokeWidth="10" />
      <path d="M192 552v80" stroke="#8b8b8b" strokeWidth="5" />
      <path d="M198 574h14" stroke="#222" strokeWidth="6" />
      <path d="M298 658l125-66v58l-125 67z" fill="#c9d3c8" stroke="#070707" strokeWidth="5" />
      <path d="M304 664l50-26v38l-50 28z" fill="#b05a3a" />
      <path d="M304 676l50-26M304 688l50-26M366 640l8 30M374 634l-4 30" stroke="#5a2c1c" strokeWidth="3" />
      <path d="M328 642v58M358 626v58M390 610v58" stroke="#070707" strokeWidth="5" />

      {/* selected walls */}
      <path d="M560 585l65-55 12 120-80-40z" fill="#8f8f8f" />
      <path d="M545 580l78-48v46l-48 22z" fill="#ddd9bd" stroke="#333" />
      <path d="M540 584l12-8 70 34v24l-76-38z" fill="#cfb47e" stroke="#111" />
      <path d="M483 567l180 88 20 34-200-72zM604 452l16-10 63 248-36-44z" fill="#3f6de0" fillOpacity=".78" stroke="#2450bd" />
      <path d="M512 590v22l60 22v-24zM585 620v32M605 628v32" fill="#7597ec" fillOpacity=".7" stroke="#87a5f0" />
      <path d="M490 576l170 84M622 470l50 200M614 476l44 170M540 605l20 20" stroke="#2b4fae" fill="none" />
      <circle cx="673" cy="705" r="9" fill="none" stroke="#25546f" strokeWidth="3" />
      <path d="M478 572l14-6v42l-14-8z" fill="#3f6de0" opacity=".6" />

      {/* poles */}
      <path d="M660 310v30M667 335v215M681 388v212M692 430v215M685 432h36M664 386h16" stroke="#111" strokeWidth="9" />
      <path d="M667 340v208M681 392v206M692 436v207" stroke="#777" strokeWidth="4" />

      {/* view cube */}
      <ellipse cx="840" cy="184" rx="80" ry="40" fill="#e8e8e8" fillOpacity=".5" stroke="#bbb" />
      <ellipse cx="840" cy="180" rx="60" ry="28" fill="#ddd" stroke="#bbb" />
      <path d="M795 120l45-20 45 22-3 48-42 20-42-25z" fill="#f4f4f4" stroke="#999" />
      <path d="M795 120l45 24 45-22M840 144v46" fill="none" stroke="#999" />
      <g fill="#777" fontSize="12" fontFamily="Lato, sans-serif">
        <text x="828" y="127">TOP</text>
        <text x="800" y="160">FRONT</text>
        <text x="845" y="160">RIGHT</text>
      </g>

      {/* navigation bar and window buttons */}
      <rect x="891" y="242" width="70" height="190" rx="8" fill="#c4c4c4" fillOpacity=".45" stroke="#999" />
      <circle cx="918" cy="292" r="15" fill="#eee" fillOpacity=".7" stroke="#777" />
      <path d="M922 256h30v20h-30zM910 284h16v16h-16zM930 262v40h16" fill="none" stroke="#556" />
      <path d="M907 352h17v14h-17z" fill="#a9d59a" stroke="#4d8a45" />
      <circle cx="937" cy="422" r="4" fill="#ccc" stroke="#444" />
      <path d="M840 28h20v5h-20zM872 24h12v10h-12zM877 20h12v10M906 22l12 12M918 22l-12 12M904 20h16v16h-16z" fill="none" stroke="#333" />
    </g>
  </svg>
);

const StatusBar = () => (
  <StyledStatus>
    <StyledStatusText>Click to select, TAB for alternates, CTRL adds, SHIFT unselects.</StyledStatusText>
    <StyledStatusIcons $width={18}><Icon name="people" /></StyledStatusIcons>
    <StyledSelectBox $width="119px">
      <StyledSelect $plain aria-label="Workset" />
      <Icon name="down" size={4} />
    </StyledSelectBox>
    <StyledStatusIcons $width={31}>
      <Icon name="dimension" size={8} />
      <span>:0</span>
    </StyledStatusIcons>
    <StyledStatusIcons $width={33}>
      <Icon name="options" />
      <Icon name="people" />
    </StyledStatusIcons>
    <StyledSelectBox $width="86px">
      <StyledSelect $plain aria-label="Design option">
        <option>Main Model</option>
      </StyledSelect>
      <Icon name="down" size={4} />
    </StyledSelectBox>
  </StyledStatus>
);

const App = () => (
  <ThemeProvider theme={theme}>
    <GlobalStyle />
    <StyledPage>
      <StyledIntro>
        In just a few clicks, you can modify the interface to better suit your way of working. For example, you can customize the ribbon.
        <br />
        on one of the 4 display parameters. You can also display multiple model views at once or overlay the views to see only
        <br />
        the one above.
      </StyledIntro>

      <StyledFigure>
        <Ribbon />
        <StyledHighlight $inset="14px 3px 12px 7px" />
        <Callout n={13} x={267} top={-20} dir="down" length={14} />
        <Callout n={14} x={525} top={-20} dir="down" length={14} tone="green" />
        <Callout n={15} top={30} dir="left" length={23} tone="orange" />
        <Callout n={16} top={58} dir="left" length={21} />
      </StyledFigure>

      <StyledFigure>
        <StyledCurve width="38" height="121" viewBox="66 236 38 121" fill="#cfcfcf">
          <path d="M83 237h18l3 14-5-2c-26 28-24 68 5 92v14c-46-28-50-80-14-111z" />
        </StyledCurve>
        <TitleBar />
        <Ribbon />
        <StyledOptions>
          <StyledContext>Modify | Walls</StyledContext>
          <StyledActivate>Activate Dimensions</StyledActivate>
        </StyledOptions>
        <StyledWorkspace>
          <StyledPalette>
            <Properties />
            <Browser />
          </StyledPalette>
          <StyledView>
            <StyledCanvas>
              <Scene />
              <StyledViewScroll>
                <Icon name="down" size={5} />
                <Icon name="up" size={4} />
                <Icon name="down" size={4} />
              </StyledViewScroll>
            </StyledCanvas>
            <StyledViewBar>
              <StyledControls>
                <StyledScale>1 : 100</StyledScale>
                {viewControls.map((name) => (
                  <Icon key={name} name={name} size={9} />
                ))}
                <Icon name="left" size={5} />
              </StyledControls>
              <StyledHorizontalScroll>
                <StyledHandle />
                <Icon name="right" size={5} />
              </StyledHorizontalScroll>
            </StyledViewBar>
          </StyledView>
        </StyledWorkspace>
        <StatusBar />

        <StyledQuickHighlight $inset="-1px 78% auto 20px" />
        <StyledQuickHighlight $inset="-1px 9% auto 50%" />
        <Callout n={2} x={18} top={-20} dir="down" length={28} />
        <Callout n={1} x={30} top={-20} dir="down" length={14} />
        <Callout n={3} x={78} top={-20} dir="down" length={14} tone="orange" />
        <Callout n={4} x={391} top={-21} dir="down" length={12} tone="orange" />
        <Callout n={12} top={55} length={26} />
        <Callout n={5} top={86} length={26} tone="orange" />
        <Callout n={6} top={129} length={36} />
        <Callout n={7} top={201} length={26} />
        <Callout n={8} top={305} length={26} />
        <Callout n={9} top={399} length={22} />
        <Callout n={10} x={266} top={394} dir="up" length={29} tone="orange" />
        <Callout n={11} top={242} dir="left" length={26} />
      </StyledFigure>

      <StyledIndex>
        <tbody>
          {index.map(([label, tail], i) => (
            <tr key={label}>
              <td>{i + 1}</td>
              <td><StyledLink href="#top" $tail={tail}>{label}</StyledLink></td>
            </tr>
          ))}
        </tbody>
      </StyledIndex>
    </StyledPage>
  </ThemeProvider>
);

export default App;
